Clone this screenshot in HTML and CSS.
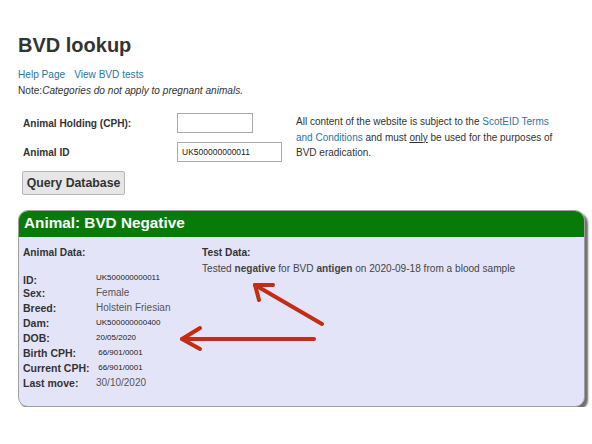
FILE: index.html
```html
<!DOCTYPE html>
<html>
<head>
<meta charset="utf-8">
<link rel="stylesheet" href="styles.css">
</head>
<body>
<h1 class="title">BVD lookup</h1>
<div class="links"><a href="#">Help Page</a><a href="#">View BVD tests</a></div>
<div class="note">Note:<i>Categories do not apply to pregnant animals.</i></div>
<form class="form">
  <label class="lbl r1">Animal Holding (CPH):</label>
  <input class="inp inp-short r1" type="text" value="">
  <p class="terms">All content of the website is subject to the <a href="#">ScotEID Terms</a><br><a href="#">and Conditions</a> and must <u>only</u> be used for the purposes of<br>BVD eradication.</p>
  <label class="lbl r2">Animal ID</label>
  <input class="inp inp-long r2" type="text" value="UK500000000011">
  <button class="btn" type="button">Query Database</button>
</form>
<div class="result">
  <div class="result-head">Animal: BVD Negative</div>
  <div class="result-body">
    <div class="col-left">
      <div class="sec">Animal Data:</div>
      <div class="rows">
        <div class="k k-id">ID:</div><div class="v small">UK500000000011</div>
        <div class="k">Sex:</div><div class="v">Female</div>
        <div class="k">Breed:</div><div class="v">Holstein Friesian</div>
        <div class="k">Dam:</div><div class="v small">UK500000000400</div>
        <div class="k">DOB:</div><div class="v small">20/05/2020</div>
        <div class="k">Birth CPH:</div><div class="v small">&nbsp;66/901/0001</div>
        <div class="k">Current CPH:</div><div class="v small">&nbsp;66/901/0001</div>
        <div class="k">Last move:</div><div class="v">30/10/2020</div>
      </div>
    </div>
    <div class="col-right">
      <div class="sec">Test Data:</div>
      <div class="test">Tested <b>negative</b> for BVD <b>antigen</b> on 2020-09-18 from a blood sample</div>
    </div>
  </div>
  <svg class="arrows" width="320" height="150" viewBox="0 0 320 150">
    <g fill="none" stroke="#c42c14" stroke-width="4" stroke-linecap="round" stroke-linejoin="round">
      <path d="M303 113 L236 74"/>
      <path d="M254 74 L236 74 L240 89"/>
      <path d="M295 128 L163 128"/>
      <path d="M181 117 L163 128 L181 138"/>
    </g>
  </svg>
</div>
</body>
</html>
```
FILE: styles.css
```css
html, body {
  margin: 0;
  padding: 0;
  background: #fff;
}
body {
  padding: 0 18px;
  font-family: "Liberation Sans", Arial, sans-serif;
  color: #333;
  font-size: 10.1px;
}
.title {
  margin: 32px 0 9px;
  font-size: 20px;
  line-height: 26px;
  font-weight: bold;
  color: #333;
}
.links {
  line-height: 16px;
  display: flex;
  gap: 9px;
}
.links a, .terms a {
  color: #2a76a0;
  text-decoration: none;
}
.note {
  line-height: 16px;
  color: #333;
}
.form {
  margin-top: 14px;
  padding-left: 5px;
  display: grid;
  grid-template-columns: 154px 119px 1fr;
  grid-template-rows: 20px 20px 24px;
  row-gap: 9px;
  align-items: center;
}
.lbl {
  font-weight: bold;
  font-size: 10.1px;
  color: #333;
}
.r1 { grid-row: 1; }
.r2 { grid-row: 2; }
.inp {
  box-sizing: border-box;
  height: 20px;
  border: 1px solid #aaa;
  padding: 0 4px;
  font-family: "Liberation Sans", Arial, sans-serif;
  font-size: 8.5px;
  color: #222;
  background: #fff;
}
.inp-short { width: 76px; }
.inp-long { width: 105px; }
.terms {
  grid-column: 3;
  grid-row: 1 / span 2;
  align-self: start;
  margin: 1px -20px 0 0;
  font-size: 10px;
  line-height: 15.5px;
  color: #333;
  white-space: nowrap;
}
.btn {
  grid-column: 1;
  grid-row: 3;
  justify-self: start;
  margin-left: -1px;
  box-sizing: border-box;
  width: 103px;
  height: 24px;
  font-family: "Liberation Sans", Arial, sans-serif;
  font-weight: bold;
  font-size: 12.3px;
  color: #333;
  background: #e6e6e6;
  border: 1px solid #b5b5b5;
  border-radius: 2px;
  padding: 0;
}
.result {
  position: relative;
  margin-top: 15px;
  width: 567px;
  box-sizing: border-box;
  border: 1px solid #a0a0a0;
  border-radius: 10px;
  background: #e4e4f8;
  box-shadow: 3px 3px 2px #6f6f6f;
  height: 197px;
}
.result-head {
  height: 26px;
  line-height: 24px;
  background: #087a08;
  color: #fff;
  font-weight: bold;
  font-size: 15.3px;
  padding-left: 5px;
  border-radius: 9px 9px 0 0;
}
.result-body {
  display: flex;
  padding: 8px 0 0 4px;
}
.col-left { width: 179px; }
.col-right { flex: 1; }
.sec {
  font-weight: bold;
  font-size: 10.2px;
  line-height: 15px;
  color: #333;
}
.rows {
  margin-top: 10px;
  display: grid;
  grid-template-columns: 73px 1fr;
  grid-auto-rows: 15px;
  align-items: center;
}
.k {
  font-weight: bold;
  font-size: 10.5px;
  color: #333;
}
.k-id { padding-top: 5px; }
.v {
  font-size: 10px;
  color: #555;
}
.small {
  font-size: 8px;
  color: #222;
}
.test {
  font-size: 10.1px;
  line-height: 17px;
  color: #444;
}
.arrows {
  position: absolute;
  left: 0;
  top: 0;
  pointer-events: none;
}
```
